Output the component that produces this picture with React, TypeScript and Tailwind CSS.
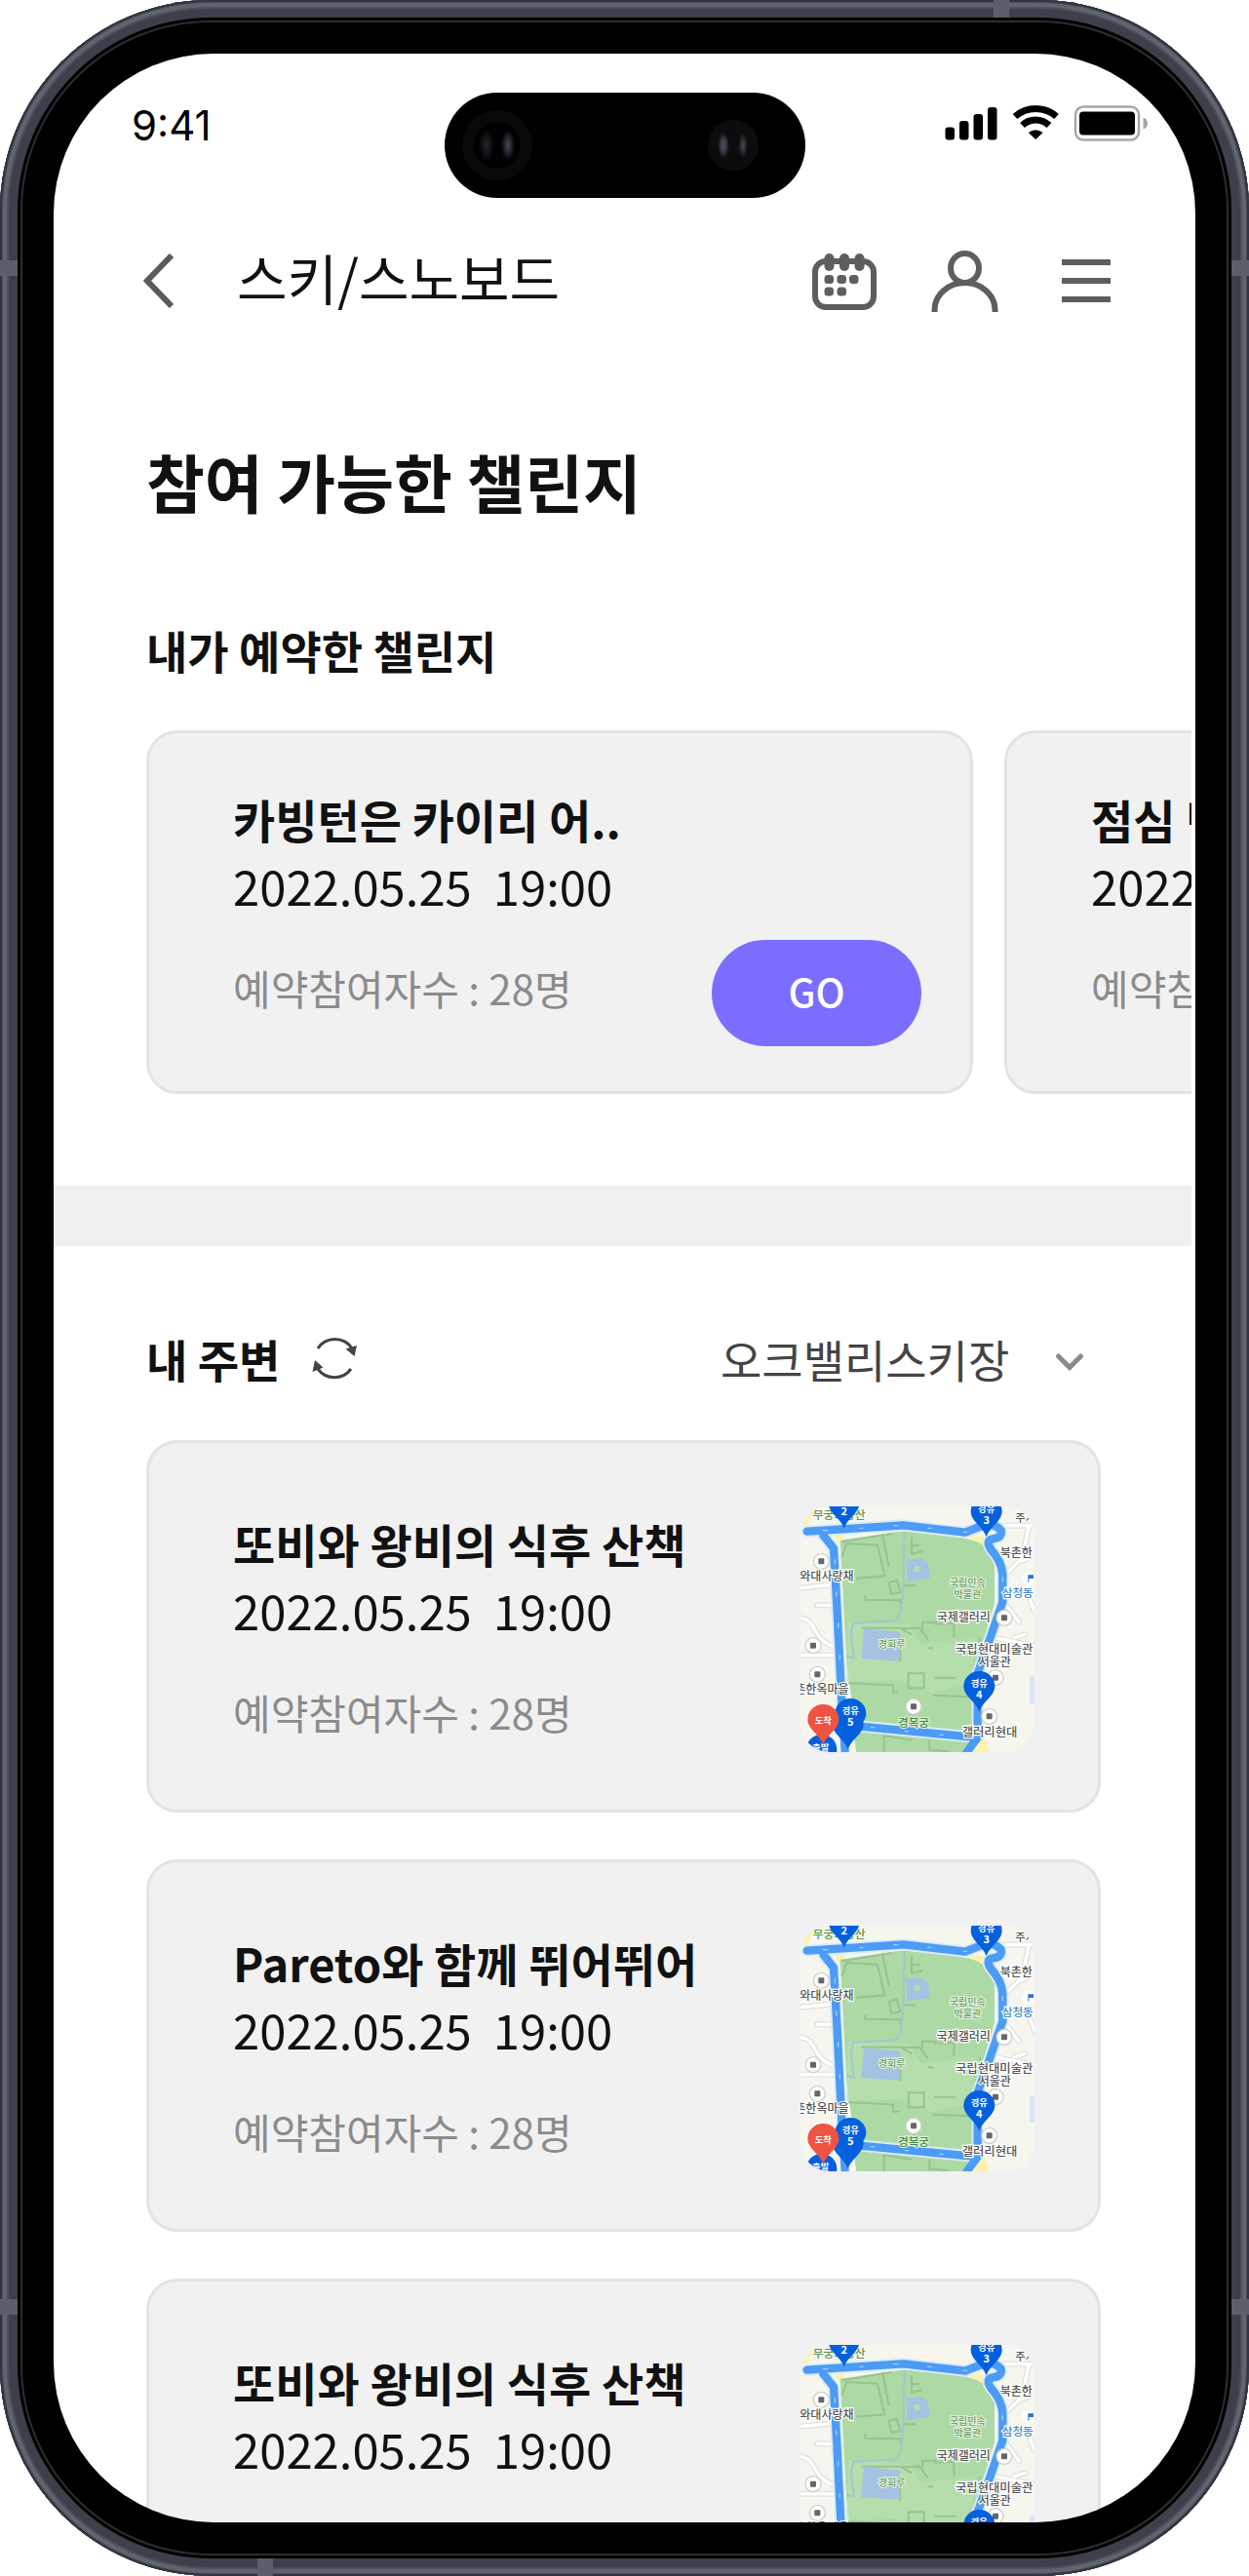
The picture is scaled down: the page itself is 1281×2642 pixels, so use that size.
import { useState } from 'react';

const font = "font-['Noto_Sans_CJK_KR','Noto_Sans',sans-serif]";

const reserved = [
	{ title: '카빙턴은 카이리 어..', date: '2022.05.25  19:00', people: 28 },
	{ title: '점심 번개 보딩..', date: '2022.05.25  19:00', people: 28 },
];

const nearby = [
	{ title: '또비와 왕비의 식후 산책', date: '2022.05.25  19:00', people: 28 },
	{ title: 'Pareto와 함께 뛰어뛰어', date: '2022.05.25  19:00', people: 28 },
	{ title: '또비와 왕비의 식후 산책', date: '2022.05.25  19:00', people: 28 },
];

type Challenge = (typeof reserved)[number];

function StatusBar() {
	return (
		<div className="flex items-start justify-between pl-20 pr-11 pt-10 h-[148px]">
			<span className="font-['Inter',sans-serif] text-[42px] leading-[68px] text-black">9:41</span>
			<svg className="mt-3 w-[210px] h-10" viewBox="968 107 210 40" fill="none" aria-hidden="true">
				<g fill="#000">
					<rect x="969.5" y="130.5" width="9.5" height="13" rx="3" />
					<rect x="984" y="124" width="9.5" height="19.5" rx="3" />
					<rect x="998.5" y="117" width="9.5" height="26.5" rx="3" />
					<rect x="1013" y="110" width="9.5" height="33.5" rx="3" />
				</g>
				<path d="M1041 119.500A32 32 0 0 1 1083.500 119.500" stroke="#000" strokeWidth="7" />
				<path d="M1048.500 128.500A20 20 0 0 1 1076 128.500" stroke="#000" strokeWidth="7" />
				<path d="M1062.200 143L1054.800 136Q1062.200 130.500 1069.600 136Z" fill="#000" />
				<rect x="1103" y="109.500" width="65" height="34" rx="8" stroke="#a6a6a6" strokeWidth="2.500" />
				<rect x="1107" y="114.500" width="57" height="24" rx="4" fill="#000" />
				<path d="M1172.500 120.500q4.500 1.500 4.500 6t-4.500 6z" fill="#a6a6a6" />
			</svg>
		</div>
	);
}

function Island() {
	return (
		<svg className="absolute left-1/2 -translate-x-1/2 top-[95px] w-[370px] h-[108px]" viewBox="0 0 370 108" aria-hidden="true">
			<defs>
				<radialGradient id="lens">
					<stop offset="0" stopColor="#454b58" />
					<stop offset="1" stopColor="#454b58" stopOpacity="0" />
				</radialGradient>
			</defs>
			<rect width="370" height="108" rx="54" fill="#000" />
			<circle cx="54" cy="54" r="36" fill="#090909" />
			<circle cx="54" cy="54" r="24" fill="#010101" />
			<ellipse cx="43" cy="54" rx="8" ry="17" fill="url(#lens)" opacity="0.5" />
			<ellipse cx="65" cy="54" rx="7" ry="16" fill="url(#lens)" />
			<circle cx="296" cy="54" r="26" fill="#0c0c0c" />
			<ellipse cx="286" cy="54" rx="6" ry="14" fill="url(#lens)" />
			<ellipse cx="286" cy="54" rx="5" ry="11" fill="url(#lens)" />
			<ellipse cx="306" cy="54" rx="5" ry="13" fill="url(#lens)" />
		</svg>
	);
}

function Header() {
	return (
		<header className="flex items-center pl-[92px] pr-[83px] h-[170px]">
			<button type="button" aria-label="뒤로" className="shrink-0">
				<svg className="w-8 h-14" viewBox="0 0 32 56" fill="none" stroke="#5b5b5b" strokeWidth="6">
					<path d="M29 2L4 28L29 54" />
				</svg>
			</button>
			<h1 className="ml-16 pb-2 text-[56px] leading-none text-[#111] whitespace-nowrap">스키/스노보드</h1>
			<div className="ml-auto flex items-center gap-14">
				<button type="button" aria-label="달력">
					<svg className="w-[66px] h-16" viewBox="0 0 66 64" fill="none">
						<rect x="3" y="12" width="60" height="47" rx="11" stroke="#5e5e5e" strokeWidth="6" />
						<g fill="#5e5e5e">
							<rect x="12.500" y="4" width="10" height="18" rx="5" />
							<rect x="28" y="4" width="10" height="18" rx="5" />
							<rect x="43.500" y="4" width="10" height="18" rx="5" />
							<rect x="12.500" y="26" width="9.500" height="9" rx="3.500" />
							<rect x="25.500" y="26" width="9.500" height="9" rx="3.500" />
							<rect x="38" y="26" width="9.500" height="9" rx="3.500" />
							<rect x="12.500" y="38.500" width="9.500" height="9" rx="3.500" />
							<rect x="25.500" y="38.500" width="9.500" height="9" rx="3.500" />
						</g>
					</svg>
				</button>
				<button type="button" aria-label="내 정보">
					<svg className="w-[70px] h-16" viewBox="0 0 70 64" fill="none" stroke="#5e5e5e" strokeWidth="6">
						<ellipse cx="34.500" cy="19" rx="14.500" ry="15" />
						<path d="M3.500 64V62A31 28 0 0 1 65.500 62V64" />
					</svg>
				</button>
				<button type="button" aria-label="메뉴" className="ml-2">
					<svg className="w-[50px] h-12" viewBox="0 0 50 48" fill="#5e5e5e">
						<rect y="2" width="50" height="6" />
						<rect y="21" width="50" height="6" />
						<rect y="40" width="50" height="6" />
					</svg>
				</button>
			</div>
		</header>
	);
}

function ChallengeInfo({ title, date, people }: Challenge) {
	return (
		<div className="flex flex-col whitespace-nowrap">
			<h3 className="text-[47px] leading-[68px] font-bold text-[#111]">{title}</h3>
			<p className="text-[49px] leading-[68px] text-[#111] whitespace-pre">{date}</p>
			<p className="mt-9 text-[42px] leading-[70px] text-[#8b8b8b]">예약참여자수 : {people}명</p>
		</div>
	);
}

function Pin({ x, y, top, num, color = '#0560dd' }: { x: number; y: number; top?: string; num?: string; color?: string }) {
	return (
		<g transform={`translate(${x} ${y})`} textAnchor="middle" fill="#fff" fontWeight="700">
			<path d="M0 0C-9-30-48-48-48-79A48 46 0 0 1 48-79C48-48 9-30 0 0Z" fill={color} />
			{top && <text y={num ? -76 : -66} fontSize="28">{top}</text>}
			{num && <text y="-41" fontSize="33">{num}</text>}
		</g>
	);
}

function Poi({ x, y }: { x: number; y: number }) {
	return (
		<g transform={`translate(${x} ${y})`}>
			<circle r="24" fill="#fff" stroke="#cfcfc9" strokeWidth="4" />
			<rect x="-9" y="-9" width="18" height="18" rx="3" fill="#666" />
		</g>
	);
}

function RouteMap() {
	return (
		<svg className="block w-[240px] h-[252px] shrink-0 rounded-[30px]" viewBox="63 76 720 756" role="img" aria-label="경복궁 산책 경로">
			<rect x="63" y="76" width="720" height="756" fill="#f7f6ee" />
			<path d="M63 76H110L85 135H63Z M165 165L200 160L185 195Z M575 165L640 170L640 210Z M625 780L645 832H595Z" fill="#fbf3ad" />
			{/* side streets */}
			<g fill="none" strokeLinecap="round">
				<g stroke="#dbdbd6" strokeWidth="17">
					<path d="M63 327L155 318M115 380H160M63 420C115 425 95 480 160 505M63 534H175M690 135H783M765 140L745 235L700 280M735 245L755 240M700 385L735 432M660 480L783 505M720 480L755 470M770 365L783 400" />
				</g>
				<g stroke="#fff" strokeWidth="11">
					<path d="M63 327L155 318M115 380H160M63 420C115 425 95 480 160 505M63 534H175M690 135H783M765 140L745 235L700 280M735 245L755 240M700 385L735 432M660 480L783 505M720 480L755 470M770 365L783 400" />
				</g>
			</g>
			<rect x="768" y="600" width="15" height="82" fill="#d8e6f5" />
			{/* palace grounds */}
			<path d="M185 180L380 152L560 172Q640 185 660 240V375L610 540L595 640V770L230 738L205 560Z" fill="#add9a5" />
			<path d="M225 765L590 795L565 832H235Z" fill="#add9a5" />
			<path d="M210 430L400 440L430 500L600 480L590 620L470 650L360 610L205 615Z" fill="#b9dfb0" opacity="0.7" />
			<g fill="none" stroke="#97c391" strokeWidth="6">
				<path d="M190 232L205 190L300 195L322 290L235 297M190 185L345 160M315 160L335 262M405 170V222L438 215M408 196H430M335 310L360 303L370 340L343 346ZM262 350V363L370 365V378M382 320H418M250 450H370L405 470M370 452L430 450L455 485M438 455V432H480V442M487 438L535 435V478M370 500V555M210 620L348 626V648H365M395 590H443V635H395ZM475 603H540M470 657L585 662M455 512H472M615 480V495M215 805L235 765M320 832V782L405 795M460 795V825L520 830" />
			</g>
			<path d="M383 155L380 300Q378 410 355 428L225 435L218 470L228 543L205 537" fill="none" stroke="#a0c7d2" strokeWidth="6" />
			<path d="M388 240L430 236L455 248L461 297L392 308Z" fill="#a5c2e2" />
			<circle cx="422" cy="268" r="10" fill="#b5dcae" />
			<path d="M258 452L370 462L366 552L250 544Z" fill="#a5c2e2" />
			<text x="182" y="115" fontSize="35" fill="#589550" textAnchor="middle" fontWeight="500">무궁화동산</text>
			{/* walking route */}
			<g fill="none" strokeLinecap="round" strokeLinejoin="round">
				<g stroke="#d9ecf8" strokeWidth="36">
					<path d="M83 153L380 134L570 156L610 140Q655 120 680 150Q685 172 655 176Q630 180 650 210Q682 245 685 285V370L640 500L608 590V775L585 785L270 755L205 750" />
					<path d="M133 165L165 205L175 380L190 680V750" />
				</g>
				<g stroke="#4c9bf5" strokeWidth="25">
					<path d="M83 153L380 134L570 156L610 140Q655 120 680 150Q685 172 655 176Q630 180 650 210Q682 245 685 285V370L640 500L608 590V775L585 785L270 755L205 750" />
					<path d="M133 165L165 205L175 380L190 680L200 832M610 785L575 832" />
				</g>
				<path d="M133 150h14M245 143h10M350 135h12M455 143h10M565 155h10M169 240v12M173 340v12M179 436v12M184 534v12M685 294v12M280 756h10M385 768h10M492 779h10" stroke="#a4cdfc" strokeWidth="4" />
			</g>
			<g fill="#6c9d6b" stroke="#e2f2dc" strokeWidth="6" paintOrder="stroke" textAnchor="middle" fontWeight="500">
				<text x="577" y="322" fontSize="30">국립민속</text>
				<text x="577" y="357" fontSize="30">박물관</text>
				<text x="344" y="511" fontSize="30">경회루</text>
				<text x="411" y="753" fontSize="35" fill="#478b45">경복궁</text>
			</g>
			<Poi x={127} y={245} />
			<Poi x={102} y={504} />
			<Poi x={115} y={593} />
			<Poi x={690} y={419} />
			<Poi x={663} y={603} />
			<Poi x={644} y={722} />
			<Poi x={411} y={692} />
			<circle cx="766" cy="297" r="21" fill="#fff" />
			<path d="M763 309V287H780V298H766V309Z" fill="#2774cc" />
			<g fill="#555" stroke="#fff" strokeWidth="7" paintOrder="stroke" fontWeight="500">
				<text x="61" y="305" fontSize="36">와대사랑채</text>
				<text x="46" y="653" fontSize="36">촌한옥마을</text>
				<text x="724" y="125" fontSize="34">주시</text>
				<text x="677" y="232" fontSize="36">북촌한</text>
				<text x="482" y="431" fontSize="36">국제갤러리</text>
				<text x="540" y="528" fontSize="37">국립현대미술관</text>
				<text x="611" y="568" fontSize="36">서울관</text>
				<text x="560" y="783" fontSize="37">갤러리현대</text>
				<text x="683" y="356" fontSize="35" fill="#4188cc">삼청동</text>
			</g>
			<Pin x={197} y={144} num="2" />
			<Pin x={635} y={170} top="경유" num="3" />
			<Pin x={613} y={708} top="경유" num="4" />
			<ellipse cx="128" cy="825" rx="47" ry="48" fill="#0560dd" />
			<text x="125" y="830" fontSize="28" fontWeight="700" textAnchor="middle" fill="#fff">출발</text>
			<Pin x={209} y={824} />
			<Pin x={217} y={792} top="경유" num="5" />
			<Pin x={133} y={810} top="도착" color="#ee5344" />
		</svg>
	);
}

export default function App() {
	const [place, setPlace] = useState('오크밸리스키장');

	return (
		<div className={`${font} relative h-screen w-full overflow-hidden rounded-[216px] bg-black p-[55px] shadow-[inset_0_0_0_2px_#30343e,inset_0_0_0_3px_#4a4e58,inset_0_0_0_7px_#60646e,inset_0_0_0_9px_#4c505a,inset_0_0_0_18px_#3d404b,inset_0_0_0_21px_#000,inset_0_0_0_23px_#2d2d2d]`}>
			{/* antenna bands */}
			<i className="absolute left-0 top-[267px] h-4 w-[18px] bg-[#5a5f69]" />
			<i className="absolute right-0 top-[267px] h-4 w-[18px] bg-[#5a5f69]" />
			<i className="absolute left-0 bottom-[268px] h-4 w-[18px] bg-[#5a5f69]" />
			<i className="absolute right-0 bottom-[268px] h-4 w-[18px] bg-[#5a5f69]" />
			<i className="absolute right-[246px] top-0 h-[18px] w-4 bg-[#5a5f69]" />
			<i className="absolute left-[264px] bottom-0 h-[18px] w-4 bg-[#5a5f69]" />

			<div className="h-full overflow-y-auto rounded-[164px] bg-white pr-1 [scrollbar-width:none]">
				<StatusBar />
				<Header />

				<main>
					<section className="pl-[95px]">
						<h2 className="pt-18 text-[65px] leading-[96px] font-bold text-[#111]">참여 가능한 챌린지</h2>
						<h3 className="mt-[90px] text-[46px] leading-[70px] font-bold text-[#111]">내가 예약한 챌린지</h3>
						<div className="mt-12 flex gap-8 overflow-hidden">
							{reserved.map((item) => (
								<article key={item.title} className="flex h-[373px] w-[848px] shrink-0 items-end justify-between rounded-[32px] border-3 border-[#e3e3e3] bg-[#f1f1f1] pl-[86px] pr-[50px] pt-[54px] pb-[46px]">
									<div className="self-start">
										<ChallengeInfo {...item} />
									</div>
									<button type="button" className="h-[109px] w-[215px] rounded-full bg-[#7b6eff] pb-1.5 text-[40px] font-medium text-white">GO</button>
								</article>
							))}
						</div>
					</section>

					<hr className="mt-[94px] h-[62px] border-0 bg-[#f0f0f0]" />

					<section className="pl-[95px] pr-[93px] pt-20">
						<div className="flex items-center">
							<h3 className="text-[46px] leading-[70px] font-bold text-[#111]">내 주변</h3>
							<button type="button" aria-label="새로고침" className="ml-8">
								<svg className="w-12 h-12" viewBox="0 0 48 48" fill="none" stroke="#444" strokeWidth="3">
									<path d="M7 14A21 21 0 0 1 42 14M41 35A21 21 0 0 1 7 35" />
									<path d="M35.500 14.500L47 11L44.500 22ZM1.500 38L4 26L12.500 33.500Z" fill="#444" stroke="none" />
								</svg>
							</button>
							<label className="relative ml-auto flex items-center">
								<select
									aria-label="스키장"
									value={place}
									onChange={(e) => setPlace(e.target.value)}
									className="appearance-none bg-transparent pr-[93px] text-[46px] leading-[70px] text-[#444]"
								>
									<option>오크밸리스키장</option>
								</select>
								<svg className="pointer-events-none absolute right-4 w-8 h-8" viewBox="0 0 32 32" fill="none" stroke="#8a8a8a" strokeWidth="5" strokeLinecap="round">
									<path d="M4.500 14L16 25.500L27.500 14" />
								</svg>
							</label>
						</div>
						<div className="mt-[49px] flex flex-col gap-12">
							{nearby.map((item, i) => (
								<article key={i} className="flex h-[382px] items-start justify-between rounded-[32px] border-3 border-[#e3e3e3] bg-[#f1f1f1] pl-[86px] pr-[65px] pt-[65px]">
									<div className="pt-1">
										<ChallengeInfo {...item} />
									</div>
									<RouteMap />
								</article>
							))}
						</div>
					</section>
				</main>
			</div>

			<Island />
		</div>
	);
}
